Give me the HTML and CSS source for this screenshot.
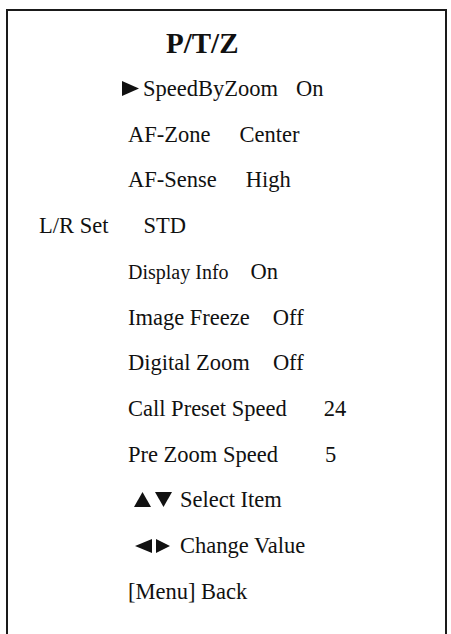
FILE: index.html
```html
<!DOCTYPE html>
<html>
<head>
<meta charset="utf-8">
<link rel="stylesheet" href="styles.css">
</head>
<body>
<div class="frame">
  <div class="title">P/T/Z</div>
  <div class="menu">
    <div class="row in-arrow">
      <svg class="tri" width="17" height="15" viewBox="0 0 17 15"><polygon points="0,0 17,7.5 0,15"/></svg>
      <span class="lbl after-arrow">SpeedByZoom</span><span class="val g18">On</span>
    </div>
    <div class="row in-main"><span class="lbl">AF-Zone</span><span class="val g29">Center</span></div>
    <div class="row in-main"><span class="lbl">AF-Sense</span><span class="val g29">High</span></div>
    <div class="row in-left"><span class="lbl">L/R Set</span><span class="val g35">STD</span></div>
    <div class="row in-main"><span class="lbl small">Display Info</span><span class="val g22">On</span></div>
    <div class="row in-main"><span class="lbl">Image Freeze</span><span class="val g23">Off</span></div>
    <div class="row in-main"><span class="lbl">Digital Zoom</span><span class="val g23">Off</span></div>
    <div class="row in-main"><span class="lbl">Call Preset Speed</span><span class="val g37">24</span></div>
    <div class="row in-main"><span class="lbl">Pre Zoom Speed</span><span class="val g47">5</span></div>
    <div class="row in-hint1">
      <svg class="tri" width="17" height="15" viewBox="0 0 17 15"><polygon points="8.5,0 17,15 0,15"/></svg>
      <svg class="tri tri-next" width="17" height="15" viewBox="0 0 17 15"><polygon points="0,0 17,0 8.5,15"/></svg>
      <span class="lbl hint-text1">Select Item</span>
    </div>
    <div class="row in-hint2">
      <svg class="tri" width="17" height="14" viewBox="0 0 17 14"><polygon points="17,0 17,14 0,7"/></svg>
      <svg class="tri tri-next2" width="14" height="14" viewBox="0 0 14 14"><polygon points="0,0 14,7 0,14"/></svg>
      <span class="lbl hint-text2">Change Value</span>
    </div>
    <div class="row in-main"><span class="lbl">[Menu] Back</span></div>
  </div>
</div>
</body>
</html>
```
FILE: styles.css
```css
html, body {
  margin: 0;
  padding: 0;
  background: #ffffff;
  overflow: hidden;
}
body {
  font-family: "Liberation Serif", "Times New Roman", serif;
  color: #111111;
}
.frame {
  box-sizing: border-box;
  margin: 9px 0 0 6px;
  width: 441px;
  height: 640px;
  border: 2px solid #1a1a1a;
  border-bottom: none;
  padding-top: 10px;
}
.title {
  font-weight: bold;
  font-size: 29px;
  line-height: 45px;
  height: 45px;
  padding-left: 158px;
}
.menu {
  display: flex;
  flex-direction: column;
}
.row {
  display: flex;
  align-items: baseline;
  height: 45.73px;
  line-height: 45.73px;
  font-size: 22.5px;
  white-space: nowrap;
}
.in-main { padding-left: 120px; }
.in-arrow { padding-left: 114px; }
.in-left { padding-left: 31px; }
.in-hint1 { padding-left: 126px; }
.in-hint2 { padding-left: 127px; }
.tri { fill: #111111; flex: none; }
.tri-next { margin-left: 4px; }
.tri-next2 { margin-left: 4px; }
.after-arrow { margin-left: 4px; }
.hint-text1 { margin-left: 8px; }
.hint-text2 { margin-left: 10px; }
.small { font-size: 20px; }
.g18 { margin-left: 18px; }
.g22 { margin-left: 22px; }
.g23 { margin-left: 23px; }
.g29 { margin-left: 29px; }
.g35 { margin-left: 35px; }
.g37 { margin-left: 37px; }
.g47 { margin-left: 47px; }
```
